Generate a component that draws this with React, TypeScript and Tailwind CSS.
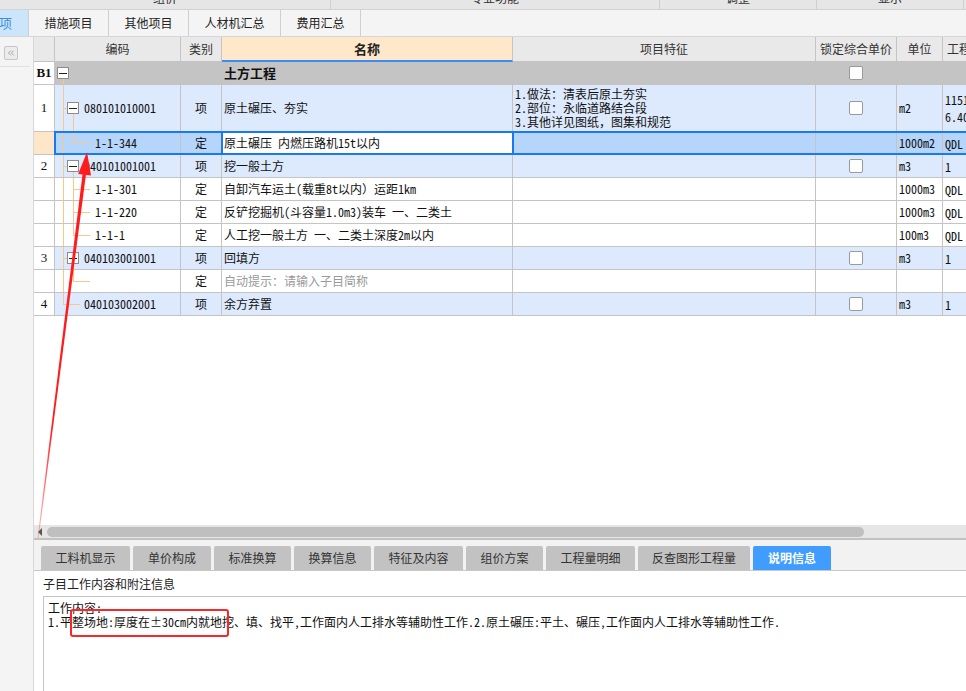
import React from 'react';
import { ChevronsLeft } from 'lucide-react';

type Tree = 'root' | 'item' | 'itemEnd' | 'child' | 'childEnd';

interface RowData {
  num: string;
  kind: 'group' | 'item' | 'sub';
  tall?: boolean;
  tree: Tree;
  code: string;
  type: string;
  name: string;
  hint?: boolean;
  feature?: string[];
  lock?: boolean;
  unit: string;
  last: string[];
  selected?: boolean;
}

const rows: RowData[] = [
  { num: 'B1', kind: 'group', tree: 'root', code: '', type: '', name: '土方工程', lock: true, unit: '', last: [] },
  {
    num: '1',
    kind: 'item',
    tall: true,
    tree: 'item',
    code: '080101010001',
    type: '项',
    name: '原土碾压、夯实',
    feature: ['1.做法：清表后原土夯实', '2.部位：永临道路结合段', '3.其他详见图纸，图集和规范'],
    lock: true,
    unit: 'm2',
    last: ['1151', '6.40'],
  },
  { num: '', kind: 'sub', selected: true, tree: 'childEnd', code: '1-1-344', type: '定', name: '原土碾压 内燃压路机15t以内', unit: '1000m2', last: ['QDL'] },
  { num: '2', kind: 'item', tree: 'item', code: '040101001001', type: '项', name: '挖一般土方', lock: true, unit: 'm3', last: ['1'] },
  { num: '', kind: 'sub', tree: 'child', code: '1-1-301', type: '定', name: '自卸汽车运土(载重8t以内）运距1km', unit: '1000m3', last: ['QDL'] },
  { num: '', kind: 'sub', tree: 'child', code: '1-1-220', type: '定', name: '反铲挖掘机(斗容量1.0m3)装车 一、二类土', unit: '1000m3', last: ['QDL'] },
  { num: '', kind: 'sub', tree: 'childEnd', code: '1-1-1', type: '定', name: '人工挖一般土方 一、二类土深度2m以内', unit: '100m3', last: ['QDL'] },
  { num: '3', kind: 'item', tree: 'item', code: '040103001001', type: '项', name: '回填方', lock: true, unit: 'm3', last: ['1'] },
  { num: '', kind: 'sub', tree: 'childEnd', code: '', type: '定', name: '自动提示：请输入子目简称', hint: true, unit: '', last: [] },
  { num: '4', kind: 'item', tree: 'itemEnd', code: '040103002001', type: '项', name: '余方弃置', lock: true, unit: 'm3', last: ['1'] },
];

const LN = 'absolute bg-[#f8c78b]';

function MinusBox({ className }: { className: string }) {
  return (
    <div
      className={`absolute top-1/2 -translate-y-1/2 w-[12px] h-[12px] border border-[#8c8c8c] bg-white flex items-center justify-center ${className}`}
    >
      <div className="w-[8px] h-px bg-[#222]" />
    </div>
  );
}

function TreeLines({ tree }: { tree: Tree }) {
  if (tree === 'root') {
    return (
      <>
        <div className={`${LN} left-[8px] top-[calc(50%+6px)] bottom-0 w-px`} />
        <MinusBox className="left-[2px]" />
      </>
    );
  }
  if (tree === 'item') {
    return (
      <>
        <div className={`${LN} left-[8px] top-0 bottom-0 w-px`} />
        <div className={`${LN} left-[8px] top-1/2 w-[4px] h-px`} />
        <div className={`${LN} left-[18px] top-[calc(50%+6px)] bottom-0 w-px`} />
        <MinusBox className="left-[12px]" />
      </>
    );
  }
  if (tree === 'itemEnd') {
    return (
      <>
        <div className={`${LN} left-[8px] top-0 h-1/2 w-px`} />
        <div className={`${LN} left-[8px] top-1/2 w-[17px] h-px`} />
      </>
    );
  }
  if (tree === 'child') {
    return (
      <>
        <div className={`${LN} left-[8px] top-0 bottom-0 w-px`} />
        <div className={`${LN} left-[18px] top-0 bottom-0 w-px`} />
        <div className={`${LN} left-[18px] top-1/2 w-[17px] h-px`} />
      </>
    );
  }
  return (
    <>
      <div className={`${LN} left-[8px] top-0 bottom-0 w-px`} />
      <div className={`${LN} left-[18px] top-0 h-1/2 w-px`} />
      <div className={`${LN} left-[18px] top-1/2 w-[17px] h-px`} />
    </>
  );
}

function CheckBox() {
  return <div className="w-[14px] h-[14px] border border-[#9a9a9a] rounded-[2px] bg-white" />;
}

function TableRow({ r }: { r: RowData }) {
  const rowBg =
    r.kind === 'group' ? 'bg-[#c4c4c4]' : r.selected ? 'bg-[#b5d5fb]' : r.kind === 'item' ? 'bg-[#dde9fc]' : 'bg-white';
  const h = r.tall ? 'h-[47px]' : 'h-[23px]';
  const cb = 'border-r border-[#c4c4c4] shrink-0';
  const codePad = r.tree === 'root' ? 'pl-[29px]' : r.tree === 'item' || r.tree === 'itemEnd' ? 'pl-[29px]' : 'pl-[40px]';
  return (
    <div className={`relative flex ${h} border-b border-[#c4c4c4] ${rowBg}`}>
      <div
        className={`${cb} w-[21px] flex items-center justify-center ${
          r.selected ? 'bg-[#fde7c8]' : 'bg-white'
        } font-['Liberation_Serif',serif] text-[13px] text-[#111] ${r.kind === 'group' ? 'font-bold' : ''}`}
      >
        {r.num}
      </div>
      <div className={`${cb} w-[126px] relative flex items-center ${codePad}`}>
        <TreeLines tree={r.tree} />
        <span>{r.code}</span>
      </div>
      <div className={`${cb} w-[41px] flex items-center justify-center`}>{r.type}</div>
      <div
        className={`${cb} w-[291px] flex items-center pl-[2px] whitespace-nowrap overflow-hidden ${
          r.selected ? 'bg-white' : ''
        } ${r.kind === 'group' ? "font-bold font-['Noto_Sans_CJK_SC',sans-serif] text-[13px]" : ''} ${
          r.hint ? 'text-[#9a9a9a]' : ''
        }`}
      >
        {r.name}
      </div>
      <div className={`${cb} w-[303px] flex flex-col justify-center pl-[2px] leading-[14px]`}>
        {r.feature?.map((f) => (
          <div key={f}>{f}</div>
        ))}
      </div>
      <div className={`${cb} w-[81px] flex items-center justify-center`}>{r.lock ? <CheckBox /> : null}</div>
      <div className={`${cb} w-[46px] flex items-center pl-[2px]`}>{r.unit}</div>
      <div className={`${cb} w-[60px] flex flex-col justify-center pl-[2px] leading-[17px]`}>
        {r.last.map((l) => (
          <div key={l}>{l}</div>
        ))}
      </div>
      {r.selected ? (
        <>
          <div className="absolute z-10 left-[20px] -right-[10px] -top-px -bottom-px border-2 border-[#1a78f2]" />
          <div className="absolute z-10 left-[187px] w-[293px] -top-px -bottom-px border-x-2 border-[#1a78f2]" />
        </>
      ) : null}
    </div>
  );
}

const bottomTabs: { label: string; w: string; active?: boolean }[] = [
  { label: '工料机显示', w: 'w-[89px]' },
  { label: '单价构成', w: 'w-[78px]' },
  { label: '标准换算', w: 'w-[77px]' },
  { label: '换算信息', w: 'w-[77px]' },
  { label: '特征及内容', w: 'w-[89px]' },
  { label: '组价方案', w: 'w-[77px]' },
  { label: '工程量明细', w: 'w-[89px]' },
  { label: '反查图形工程量', w: 'w-[112px]' },
  { label: '说明信息', w: 'w-[78px]', active: true },
];

export default function App() {
  return (
    <div className="relative w-[966px] h-[691px] overflow-hidden bg-white flex flex-col font-['Noto_Sans_CJK_SC',sans-serif] text-[12px] text-[#222]">
      {/* top strip (cut-off ribbon labels) */}
      <div className="h-[10px] shrink-0 bg-[#e6e6e6] border-b border-[#d2d2d2] flex overflow-hidden text-[12px] leading-[12px] text-[#333]">
        <div className="w-[331px] border-r border-[#cfcfcf] flex justify-center">
          <span className="-mt-[8px]">组价</span>
        </div>
        <div className="w-[329px] border-r border-[#cfcfcf] flex justify-center">
          <span className="-mt-[8px]">专业功能</span>
        </div>
        <div className="w-[157px] border-r border-[#cfcfcf] flex justify-center">
          <span className="-mt-[8px]">调整</span>
        </div>
        <div className="w-[147px] border-r border-[#cfcfcf] flex justify-center">
          <span className="-mt-[8px]">显示</span>
        </div>
      </div>

      {/* tab bar */}
      <div className="h-[27px] shrink-0 bg-[#f4f4f4] border-b border-[#d6d6d6] flex text-[12px] text-[#222]">
        <div className="w-[29px] bg-[#cce5fb] text-[#3b8de0] flex items-center border-r border-[#d0d0d0] overflow-hidden">
          <span className="-ml-[1px] text-[13px]">项</span>
        </div>
        <div className="w-[80px] border-r border-[#d0d0d0] flex items-center justify-center">措施项目</div>
        <div className="w-[80px] border-r border-[#d0d0d0] flex items-center justify-center">其他项目</div>
        <div className="w-[92px] border-r border-[#d0d0d0] flex items-center justify-center">人材机汇总</div>
        <div className="w-[80px] border-r border-[#d0d0d0] flex items-center justify-center">费用汇总</div>
      </div>

      {/* main */}
      <div className="flex-1 flex min-h-0">
        {/* left panel */}
        <div className="w-[34px] shrink-0 bg-[#f4f4f4] border-r border-[#d8d8d8]">
          <div className="w-[30px] h-[30px] border-b border-[#e0e0e0] pt-[9px] pl-[4px]">
            <div className="w-[14px] h-[14px] bg-[#ececec] border border-[#c6c6c6] rounded-[2px] flex items-center justify-center">
              <ChevronsLeft size={10} strokeWidth={1.5} color="#777" />
            </div>
          </div>
        </div>

        {/* right content */}
        <div className="flex-1 min-w-0 flex flex-col overflow-hidden">
          {/* table area */}
          <div className="flex-1 flex flex-col min-h-0 font-['Noto_Sans_Mono_CJK_SC','Noto_Sans_CJK_SC',monospace] text-[12px] text-[#111]">
            {/* header */}
            <div className="h-[25px] shrink-0 flex bg-[#e9e9e9] font-['Noto_Sans_CJK_SC',sans-serif] text-[12px] text-[#333]">
              <div className="w-[21px] shrink-0 border-r border-b border-[#c4c4c4]" />
              <div className="w-[126px] shrink-0 border-r border-b border-[#c4c4c4] flex items-center justify-center">编码</div>
              <div className="w-[41px] shrink-0 border-r border-b border-[#c4c4c4] flex items-center justify-center">类别</div>
              <div className="w-[291px] shrink-0 border-r border-[#c4c4c4] border-b-2 border-b-[#3d8ef0] bg-[#fee8c9] flex items-center justify-center font-bold text-[13px] text-[#222]">
                名称
              </div>
              <div className="w-[303px] shrink-0 border-r border-b border-[#c4c4c4] flex items-center justify-center">项目特征</div>
              <div className="w-[81px] shrink-0 border-r border-b border-[#c4c4c4] flex items-center justify-center whitespace-nowrap">
                锁定综合单价
              </div>
              <div className="w-[46px] shrink-0 border-r border-b border-[#c4c4c4] flex items-center justify-center">单位</div>
              <div className="w-[60px] shrink-0 border-r border-b border-[#c4c4c4] flex items-center pl-[4px] whitespace-nowrap">
                工程量表达式
              </div>
            </div>
            {rows.map((r, i) => (
              <TableRow key={i} r={r} />
            ))}
            <div className="flex-1" />
            {/* horizontal scrollbar */}
            <div className="h-[13px] shrink-0 bg-[#e6e6e6] flex items-center">
              <div className="ml-[4px] w-0 h-0 border-y-[4px] border-y-transparent border-r-[4px] border-r-[#555]" />
              <div className="ml-[5px] w-[817px] h-[10px] rounded-full bg-[#bfbfbf]" />
            </div>
            <div className="h-[2px] shrink-0 bg-[#c2c2c2]" />
          </div>

          {/* bottom panel */}
          <div className="h-[151px] shrink-0 bg-[#f2f2f2] flex flex-col">
            <div className="pt-[6px] pl-[7px] flex gap-[3px] h-[30px] shrink-0">
              {bottomTabs.map((t) => (
                <div
                  key={t.label}
                  className={`${t.w} h-[24px] shrink-0 rounded-t-[2px] flex items-center justify-center text-[12px] ${
                    t.active ? 'bg-[#409cff] text-white font-bold' : 'bg-[#c2c2c2] text-[#333]'
                  }`}
                >
                  {t.label}
                </div>
              ))}
            </div>
            <div className="h-px shrink-0 bg-[#c8c8c8]" />
            <div className="flex-1 bg-white flex flex-col min-h-0">
              <div className="h-[25px] shrink-0 flex items-center pl-[9px] text-[12px] text-[#222]">子目工作内容和附注信息</div>
              <div className="flex-1 ml-[9px] border-t border-l border-[#c4c4c4] pt-[4px] pl-[4px] font-['Noto_Sans_Mono_CJK_SC','Noto_Sans_CJK_SC',monospace] text-[12px] leading-[14px] text-[#111] whitespace-nowrap">
                <div>工作内容:</div>
                <div>1.平整场地:厚度在±30cm内就地挖、填、找平,工作面内人工排水等辅助性工作.2.原土碾压:平土、碾压,工作面内人工排水等辅助性工作.</div>
              </div>
            </div>
          </div>
        </div>
      </div>

      {/* annotation: red box */}
      <div className="absolute z-20 left-[70px] top-[609px] w-[159px] h-[28px] border-2 border-[#f42a2a] rounded-[3px] pointer-events-none" />

      {/* annotation: red arrow */}
      <svg className="absolute z-20 left-0 top-0 pointer-events-none" width="966" height="691" viewBox="0 0 966 691">
        <defs>
          <linearGradient id="arrowFade" gradientUnits="userSpaceOnUse" x1="87" y1="152" x2="38" y2="540">
            <stop offset="0" stopColor="#ff1c1c" stopOpacity="1" />
            <stop offset="0.7" stopColor="#ff1c1c" stopOpacity="1" />
            <stop offset="1" stopColor="#ff1c1c" stopOpacity="0.25" />
          </linearGradient>
        </defs>
        <polygon points="82.8,172 86.2,172.4 38.6,538 37.6,538" fill="url(#arrowFade)" />
        <polygon points="87,152 78.2,174 91,175.6" fill="#ff1c1c" />
      </svg>
    </div>
  );
}
